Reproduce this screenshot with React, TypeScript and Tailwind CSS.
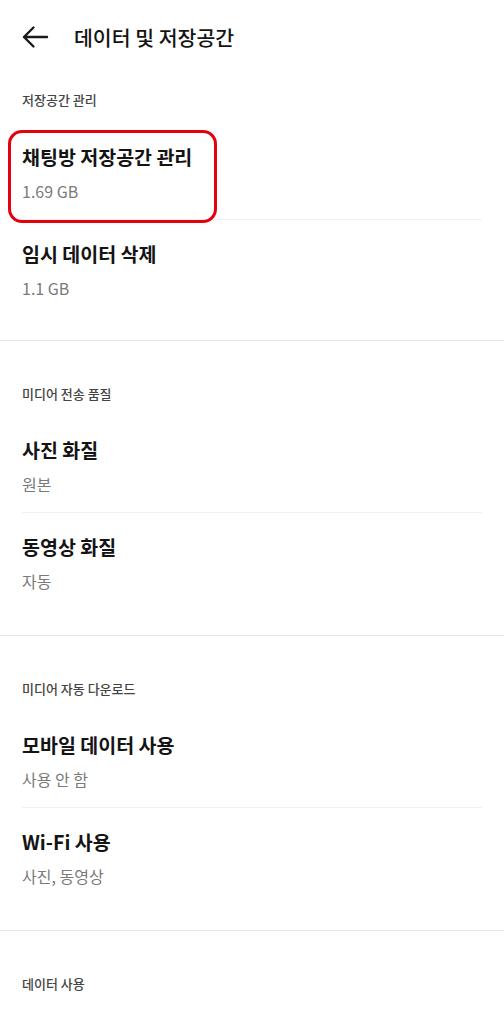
import React from 'react';

type Item = { title: string; value: string };
type Section = { label: string; items: Item[] };

const sections: Section[] = [
  {
    label: '저장공간 관리',
    items: [
      { title: '채팅방 저장공간 관리', value: '1.69 GB' },
      { title: '임시 데이터 삭제', value: '1.1 GB' },
    ],
  },
  {
    label: '미디어 전송 품질',
    items: [
      { title: '사진 화질', value: '원본' },
      { title: '동영상 화질', value: '자동' },
    ],
  },
  {
    label: '미디어 자동 다운로드',
    items: [
      { title: '모바일 데이터 사용', value: '사용 안 함' },
      { title: 'Wi-Fi 사용', value: '사진, 동영상' },
    ],
  },
  { label: '데이터 사용', items: [] },
];

function BackArrow() {
  return (
    <svg width="28" height="24" viewBox="0 0 28 24" fill="none" aria-hidden>
      <path
        d="M26 12H3M12.5 2.5L3 12l9.5 9.5"
        stroke="#1a1a1a"
        strokeWidth="2.4"
        strokeLinecap="round"
        strokeLinejoin="round"
      />
    </svg>
  );
}

function SettingRow({ item, last }: { item: Item; last: boolean }) {
  return (
    <div className="px-[22px]">
      <div className={last ? 'pt-[20px] pb-[16px]' : 'pt-[20px] pb-[16px] border-b border-[#f1f1f1]'}>
        <div className="text-[19.5px] leading-[28px] font-semibold text-[#141414]">{item.title}</div>
        <div className="mt-2 text-[16px] leading-[24px] text-[#7a7a7a]">{item.value}</div>
      </div>
    </div>
  );
}

export default function App() {
  return (
    <div
      className="relative w-[504px] h-[1024px] overflow-hidden bg-white"
      style={{ fontFamily: '"Noto Sans CJK KR", "Noto Sans", Roboto, sans-serif' }}
    >
      <header className="h-[74px] flex items-center pl-[21px]">
        <BackArrow />
        <h1 className="ml-[25px] text-[20.5px] font-medium text-[#141414]">데이터 및 저장공간</h1>
      </header>

      {sections.map((section, i) => (
        <section key={section.label} className={i > 0 ? 'border-t border-[#e6e6e6]' : ''}>
          <div
            className={
              i === 0
                ? 'px-[22px] pt-[16px] pb-[13px] text-[13px] leading-[20px] font-medium text-[#444]'
                : 'px-[22px] pt-[43px] pb-[12px] text-[13px] leading-[20px] font-medium text-[#444]'
            }
          >
            {section.label}
          </div>
          {section.items.length > 0 && (
            <div className={i === 0 ? 'pb-[24px]' : 'pb-[26px]'}>
              {section.items.map((item, j) => (
                <SettingRow key={item.title} item={item} last={j === section.items.length - 1} />
              ))}
            </div>
          )}
        </section>
      ))}

      {/* annotation box round the first row */}
      <div className="absolute left-[8px] top-[130px] w-[209px] h-[93px] rounded-[14px] border-[3.5px] border-[#e6000b] pointer-events-none" />
    </div>
  );
}
